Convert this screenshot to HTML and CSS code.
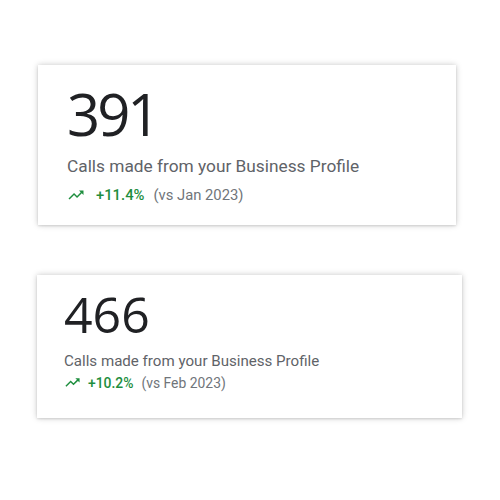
FILE: index.html
```html
<!DOCTYPE html>
<html>
<head>
<meta charset="utf-8">
<link rel="stylesheet" href="styles.css">
</head>
<body>
<div class="page">
  <div class="card card-one">
    <div class="value">391</div>
    <div class="label">Calls made from your Business Profile</div>
    <div class="trend">
      <svg class="trend-icon" viewBox="0 0 24 24"><path d="M16 6l2.29 2.29-4.88 4.88-4-4L2 16.59 3.41 18l6-6 4 4 6.3-6.29L22 12V6z"/></svg>
      <span class="pct">+11.4%</span>
      <span class="cmp">(vs Jan 2023)</span>
    </div>
  </div>
  <div class="card card-two">
    <div class="value">466</div>
    <div class="label">Calls made from your Business Profile</div>
    <div class="trend">
      <svg class="trend-icon" viewBox="0 0 24 24"><path d="M16 6l2.29 2.29-4.88 4.88-4-4L2 16.59 3.41 18l6-6 4 4 6.3-6.29L22 12V6z"/></svg>
      <span class="pct">+10.2%</span>
      <span class="cmp">(vs Feb 2023)</span>
    </div>
  </div>
</div>
</body>
</html>
```
FILE: styles.css
```css
* { box-sizing: border-box; }
html, body { margin: 0; background: #fff; }
body { font-family: Roboto, "Liberation Sans", sans-serif; }
.page {
  width: 500px;
  height: 500px;
  padding-top: 65px;
  display: flex;
  flex-direction: column;
  gap: 50px;
}
.card {
  background: #fff;
  box-shadow: 0 0 6px rgba(0,0,0,0.22), 0 1px 2px rgba(0,0,0,0.1);
  display: flex;
  flex-direction: column;
}
.card-one {
  width: 418px;
  height: 160px;
  margin-left: 38px;
  padding: 14px 0 0 29px;
}
.card-two {
  width: 425px;
  height: 143px;
  margin-left: 37px;
  padding: 9px 0 0 27px;
}
.value {
  font-family: "Open Sans", sans-serif;
  color: #202124;
}
.card-one .value { font-size: 58px; line-height: 70px; letter-spacing: -3px; }
.card-two .value { font-size: 50px; line-height: 60px; letter-spacing: 0; }
.label { color: #5f6368; }
.card-one .label { font-size: 17.3px; margin-top: 7px; }
.card-two .label { font-size: 15.1px; margin-top: 8px; }
.trend {
  display: flex;
  align-items: center;
}
.trend-icon { fill: #1e8e3e; }
.card-one .trend-icon { width: 18px; height: 18px; }
.card-two .trend-icon { width: 17px; height: 17px; }
.pct { color: #1e8e3e; font-weight: 500; }
.cmp { color: #70757a; }
.card-one .trend { font-size: 14.8px; margin-top: 10px; }
.card-one .pct { margin-left: 11px; }
.card-one .cmp { margin-left: 9px; }
.card-two .trend { font-size: 13.9px; margin-top: 4px; }
.card-two .pct { margin-left: 7px; }
.card-two .cmp { margin-left: 8px; }
```
